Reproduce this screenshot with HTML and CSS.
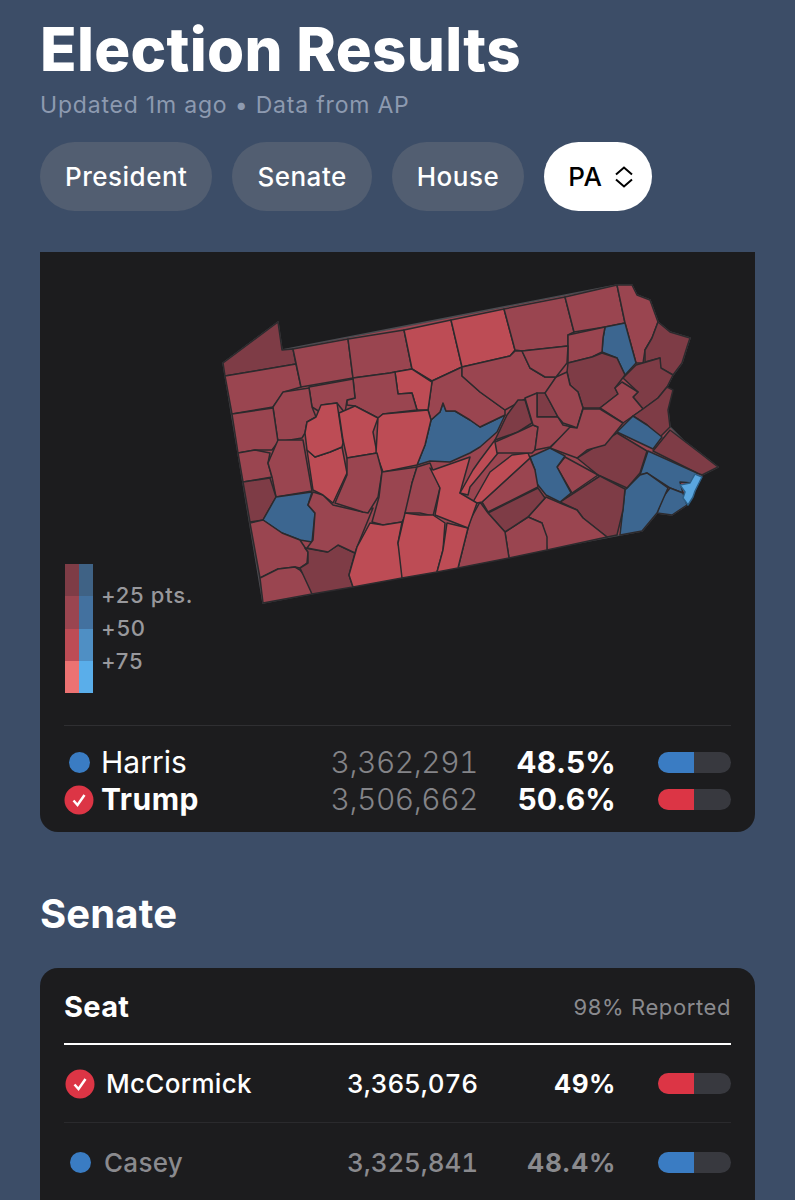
FILE: index.html
```html
<!DOCTYPE html>
<html lang="en">
<head>
<meta charset="utf-8">
<title>Election Results</title>
<link rel="stylesheet" href="styles.css">
</head>
<body>
<header class="head">
  <h1 class="title">Election Results</h1>
  <p class="sub">Updated 1m ago • Data from AP</p>
  <nav class="pills">
    <span class="pill">President</span>
    <span class="pill">Senate</span>
    <span class="pill">House</span>
    <span class="pill pill-on">PA
      <svg class="updown" viewBox="0 0 20 24" width="20" height="24"><path d="M2 9.500 10 2.500l8 7M2 14.500 10 21.500l8-7"/></svg>
    </span>
  </nav>
</header>

<section class="card card-map">
  <div class="map">
    <svg class="map-svg" viewBox="40 252 715 465" width="715" height="465">
      <polygon class="state" points="223,363 278,322 282,350 617,285 632,285 637,295 650,300 658,322 670,332 690,338 687,347 682,363 673,375 667,387 670,393 668,410 670,427 683,440 700,453 718,467 702,475 693,495 687,505 672,515 657,513 647,525 642,531 620,535 263,603"/>
      <polygon class="c d" points="223,363 278,322 282,350 293,349 296,364 225,376"/>
      <polygon class="c m" points="225,376 296,364 301,387 284,392 273,407 232,414"/>
      <polygon class="c m" points="293,349 348,339 353,378 301,387"/>
      <polygon class="c m" points="348,339 404,330 412,369 395,372 390,373 353,378"/>
      <polygon class="c b" points="404,330 451,320 462,367 432,381 412,369"/>
      <polygon class="c b" points="451,320 504,309 515,350 510,356 462,367"/>
      <polygon class="c m" points="504,309 565,297 574,332 568,335 568,346 522,351 515,350"/>
      <polygon class="c m" points="565,297 617,285 625,323 605,327 574,332"/>
      <polygon class="c m" points="617,285 632,285 637,295 650,300 658,322 652,338 645,350 643,363 636,363 625,323"/>
      <polygon class="c u" points="605,327 625,323 636,363 625,375 617,358 602,352 603,338"/>
      <polygon class="c m" points="568,335 605,327 603,338 602,352 592,357 568,363"/>
      <polygon class="c d" points="658,322 670,332 690,338 687,347 682,363 673,375 660,368 660,358 645,362 645,350 652,338"/>
      <polygon class="c d" points="636,365 660,358 661,368 673,375 667,387 658,398 643,409 633,397 638,392 623,378"/>
      <polygon class="c d" points="567,372 568,363 592,357 602,353 617,358 625,375 615,388 618,394 600,408 583,408 578,392 570,385"/>
      <polygon class="c m" points="615,388 622,382 638,392 633,397 643,409 623,423 600,408 618,394"/>
      <polygon class="c d" points="643,409 658,398 667,387 673,390 668,410 670,427 660,437 647,425 633,416"/>
      <polygon class="c u" points="633,416 647,425 662,437 653,449 617,432"/>
      <polygon class="c d" points="653,451 670,430 683,440 700,453 718,467 702,475 697,473"/>
      <polygon class="c u" points="648,451 697,473 692,483 680,482 683,493 670,488 647,473 640,475"/>
      <polygon class="c u" points="670,488 683,493 687,505 672,515 657,513 663,497"/>
      <polygon class="c u" points="640,475 647,473 668,488 657,513 647,525 642,531 620,535 625,490"/>
      <polygon class="c l" points="695,474 702,477 695,491 693,497 688,505 683,498 685,492 680,485 690,483"/>
      <polygon class="c d" points="577,458 617,433 647,451 640,473 627,488 598,475"/>
      <polygon class="c d" points="560,502 600,476 625,489 623,510 617,535 607,537 583,518 577,510"/>
      <polygon class="c m" points="565,457 598,475 572,493 557,467"/>
      <polygon class="c u" points="550,448 565,456 557,467 571,493 560,502 546,495 538,485 530,480 535,470 530,457"/>
      <polygon class="c m" points="546,497 560,503 577,510 583,518 607,537 547,550 545,535 542,523 528,517"/>
      <polygon class="c m" points="528,517 542,523 547,537 547,550 509,558 505,532"/>
      <polygon class="c d" points="488,513 538,488 545,498 528,517 505,532"/>
      <polygon class="c m" points="470,520 480,502 488,513 505,532 509,558 458,568 468,528"/>
      <polygon class="c m" points="482,502 530,458 535,470 538,487 488,512"/>
      <polygon class="c b" points="473,502 490,472 512,455 528,453 530,458 482,502 477,503"/>
      <polygon class="c u" points="417,465 425,445 431,420 440,412 443,403 446,411 455,411 470,420 480,427 505,415 497,432 480,447 470,453 450,462 430,461"/>
      <polygon class="c m" points="432,381 462,367 462,376 480,392 505,410 505,415 480,427 470,420 455,411 446,411 443,403 440,412 431,420 428,410"/>
      <polygon class="c m" points="462,367 510,356 515,351 522,351 530,368 545,377 556,377 547,393 527,398 505,410 480,392 462,376"/>
      <polygon class="c b" points="395,372 412,369 432,382 428,410 417,410 412,393 398,394"/>
      <polygon class="c m" points="353,378 390,373 395,372 398,394 412,393 417,410 383,414 378,418 355,406 347,405 347,400 355,398"/>
      <polygon class="c m" points="309,387 353,379 355,398 347,400 345,413 337,403 322,405 320,412 312,407"/>
      <polygon class="c m" points="273,407 283,392 309,388 312,407 316,417 307,422 305,433 302,438 278,442"/>
      <polygon class="c m" points="232,414 273,408 278,442 272,450 255,450 238,453"/>
      <polygon class="c m" points="238,453 255,450 270,453 268,463 272,477 243,482"/>
      <polygon class="c m" points="268,463 278,440 303,440 312,491 276,497 272,477"/>
      <polygon class="c d" points="243,482 270,478 276,497 263,520 250,522"/>
      <polygon class="c u" points="276,497 312,492 308,505 315,513 312,542 300,540 282,533 263,520"/>
      <polygon class="c m" points="250,523 263,520 282,533 300,540 308,552 307,563 300,568 295,567 278,569 260,578"/>
      <polygon class="c m" points="260,578 278,569 295,567 300,570 308,580 312,594 263,603"/>
      <polygon class="c d" points="300,568 308,563 308,552 305,548 327,552 338,545 355,553 349,575 353,587 312,594"/>
      <polygon class="c m" points="313,492 323,495 333,505 363,512 373,508 357,547 355,553 338,545 328,552 307,548 313,540 315,513 308,505"/>
      <polygon class="c b" points="307,450 315,457 330,452 342,447 347,473 333,503 323,495 313,490"/>
      <polygon class="c b" points="305,433 307,422 316,417 321,405 337,403 343,443 342,447 330,452 315,457 307,450"/>
      <polygon class="c b" points="339,413 355,406 378,418 373,432 377,453 347,458 343,440"/>
      <polygon class="c b" points="378,418 383,414 428,410 431,420 425,445 417,465 383,472 376,453"/>
      <polygon class="c m" points="347,458 377,453 382,472 378,497 368,513 363,512 335,503 347,475"/>
      <polygon class="c m" points="382,472 417,467 412,483 407,512 402,522 383,525 372,522 379,497"/>
      <polygon class="c m" points="417,467 430,463 440,488 433,516 420,513 405,513 412,483"/>
      <polygon class="c b" points="370,523 383,525 402,522 398,543 403,565 402,578 353,587 349,575 357,547"/>
      <polygon class="c b" points="405,513 420,515 433,515 445,523 443,550 437,572 402,578 398,543"/>
      <polygon class="c b" points="447,523 468,528 458,568 437,572 443,550"/>
      <polygon class="c b" points="430,468 433,470 470,457 460,493 477,503 468,528 435,515 440,488"/>
      <polygon class="c b" points="460,493 473,470 480,460 495,440 498,453 480,475 470,487 468,495"/>
      <polygon class="c d" points="507,415 518,400 525,400 532,423 518,432 495,440"/>
      <polygon class="c m" points="495,442 518,432 533,425 538,427 535,450 532,453 497,453"/>
      <polygon class="c d" points="537,393 545,393 550,402 558,417 537,417"/>
      <polygon class="c m" points="525,398 537,393 537,417 558,417 563,425 572,427 550,447 535,450 538,427 533,425"/>
      <polygon class="c m" points="545,393 556,377 567,372 570,385 578,392 583,408 577,428 572,426 563,423 558,417 550,402"/>
      <polygon class="c m" points="583,409 600,409 623,423 615,433 605,445 587,450 577,458 550,448 570,427 577,428"/>
      <polygon class="c m" points="522,351 568,346 567,363 556,377 545,377 530,368"/>
    </svg>
    <div class="legend">
      <div class="scale">
        <span class="sw r1"></span><span class="sw u1"></span>
        <span class="sw r2"></span><span class="sw u2"></span>
        <span class="sw r3"></span><span class="sw u3"></span>
        <span class="sw r4"></span><span class="sw u4"></span>
      </div>
      <div class="scale-labels">
        <span>+25 pts.</span>
        <span>+50</span>
        <span>+75</span>
      </div>
    </div>
  </div>
  <div class="pres">
    <div class="pres-row">
      <span class="who"><span class="mark"><span class="dot"></span></span><span class="name">Harris</span></span>
      <span class="votes">3,362,291</span>
      <span class="pct">48.5%</span>
      <span class="bar"><span class="fill fill-blue"></span></span>
    </div>
    <div class="pres-row">
      <span class="who"><span class="mark"><svg class="tick" viewBox="0 0 30 30" width="30" height="30"><circle cx="15" cy="15" r="14.500"/><path d="M9.500 15.500 13.500 20 20.500 10"/></svg></span><span class="name name-win">Trump</span></span>
      <span class="votes">3,506,662</span>
      <span class="pct">50.6%</span>
      <span class="bar"><span class="fill fill-red"></span></span>
    </div>
  </div>
</section>

<h2 class="section">Senate</h2>

<section class="card card-seat">
  <div class="seat-head">
    <span class="seat-title">Seat</span>
    <span class="seat-rep">98% Reported</span>
  </div>
  <div class="seat-row">
    <span class="who who-seat"><span class="mark"><svg class="tick" viewBox="0 0 30 30" width="30" height="30"><circle cx="15" cy="15" r="14.500"/><path d="M9.500 15.500 13.500 20 20.500 10"/></svg></span><span class="seat-name">McCormick</span></span>
    <span class="seat-votes">3,365,076</span>
    <span class="seat-pct">49%</span>
    <span class="bar"><span class="fill fill-red"></span></span>
  </div>
  <div class="seat-row seat-lose">
    <span class="who who-seat who-lose"><span class="mark"><span class="dot"></span></span><span class="seat-name">Casey</span></span>
    <span class="seat-votes">3,325,841</span>
    <span class="seat-pct">48.4%</span>
    <span class="bar"><span class="fill fill-blue"></span></span>
  </div>
</section>
</body>
</html>
```

FILE: styles.css
```css
* { box-sizing: border-box; }
html, body { margin: 0; height: 1200px; overflow: hidden; }
body {
  background: #3c4d67;
  color: #fff;
  font-family: Inter, "Liberation Sans", sans-serif;
  padding: 0 40px;
}
.head { height: 252px; }
.title {
  margin: 0;
  padding-top: 15px;
  font-size: 60px;
  line-height: 68px;
  font-weight: 800;
  letter-spacing: 0.3px;
}
.sub {
  margin: 7px 0 0;
  font-size: 23px;
  line-height: 30px;
  letter-spacing: 0.8px;
  color: #8d9ab0;
}
.pills { display: flex; gap: 20px; margin-top: 22px; }
.pill {
  display: inline-flex;
  align-items: center;
  height: 69px;
  padding: 0 25px;
  border-radius: 34.5px;
  background: #525e71;
  font-size: 26px;
  font-weight: 500;
  letter-spacing: 0.5px;
}
.pill-on { background: #fff; color: #000; gap: 12px; padding: 0 18px 0 24px; }
.updown { fill: none; stroke: #000; stroke-width: 2; }

.card { background: #1c1c1e; width: 715px; }
.card-map { height: 580px; border-radius: 0 0 18px 18px; }
.map { position: relative; height: 473px; }
.map-svg { display: block; filter: blur(0.35px); }
.state { fill: #9a4550; stroke: #4a4b50; stroke-width: 1.5; stroke-linejoin: round; }
.c { stroke: #2c2a2d; stroke-width: 1.5; stroke-linejoin: round; }
.b { fill: #bd4c55; }
.m { fill: #9a4550; }
.d { fill: #7e3c46; }
.u { fill: #3c6690; }
.l { fill: #5aa6df; stroke: #2d5f86; }

.legend { position: absolute; left: 25px; top: 312px; display: flex; gap: 8px; }
.scale { display: grid; grid-template-columns: 14px 14px; grid-auto-rows: 32.25px; }
.r1 { background: #7e3c46; } .u1 { background: #3f6285; }
.r2 { background: #9a4550; } .u2 { background: #43719f; }
.r3 { background: #bd4c55; } .u3 { background: #4f8fc4; }
.r4 { background: #ec7272; } .u4 { background: #5aaeea; }
.scale-labels {
  display: flex;
  flex-direction: column;
  gap: 3px;
  padding-top: 16px;
  font-size: 22px;
  line-height: 30px;
  letter-spacing: 0.7px;
  color: #98989c;
  font-weight: 500;
}

.pres {
  margin: 0 24px;
  padding-top: 18px;
  border-top: 1px solid #2f2f32;
}
.pres-row {
  display: grid;
  grid-template-columns: 1fr 161px 138px 115px;
  align-items: center;
  height: 37px;
}
.who { display: flex; align-items: center; gap: 7px; }
.mark { width: 30px; display: flex; align-items: center; justify-content: center; }
.dot { width: 21px; height: 21px; border-radius: 50%; background: #3a7cc3; }
.tick { display: block; }
.tick circle { fill: #dc3545; }
.tick path { fill: none; stroke: #fff; stroke-width: 2.5; }
.name { font-size: 30px; line-height: 35px; }
.name-win { font-weight: 700; letter-spacing: 0.5px; }
.votes { text-align: right; font-size: 30px; line-height: 35px; color: #848488; font-weight: 300; letter-spacing: -0.5px; font-variant-numeric: tabular-nums; }
.pct { text-align: right; font-size: 30px; line-height: 35px; font-weight: 700; letter-spacing: 0.2px; }
.bar {
  justify-self: end;
  width: 73px;
  height: 21px;
  border-radius: 10.5px;
  background: #38393f;
  overflow: hidden;
  display: block;
}
.fill { display: block; height: 100%; width: 36px; }
.fill-blue { background: #3a7cc3; }
.fill-red { background: #dc3545; }

.section {
  margin: 59px 0 0;
  font-size: 40px;
  line-height: 46px;
  font-weight: 700;
  letter-spacing: 0.15px;
}
.card-seat { margin-top: 31px; border-radius: 18px 18px 0 0; padding: 0 24px; height: 240px; }
.seat-head {
  display: flex;
  justify-content: space-between;
  align-items: center;
  height: 77px;
  border-bottom: 2px solid #fff;
}
.seat-title { font-size: 29px; font-weight: 700; padding-top: 1px; letter-spacing: 0.3px; }
.seat-rep { font-size: 22px; letter-spacing: 0.6px; color: #8a8a8e; padding-top: 2px; }
.seat-row {
  display: grid;
  grid-template-columns: 1fr 161px 138px 115px;
  align-items: center;
  height: 78px;
  border-bottom: 1px solid #2a2a2d;
}
.who-seat { gap: 11px; padding-left: 1px; }
.who-lose { gap: 9px; }
.seat-name { font-size: 26px; font-weight: 500; letter-spacing: 0.3px; }
.seat-votes { text-align: right; font-size: 26px; font-weight: 500; letter-spacing: -0.1px; font-variant-numeric: tabular-nums; }
.seat-pct { text-align: right; font-size: 26px; font-weight: 700; letter-spacing: 0.5px; }
.seat-lose { color: #8a8a8e; border-bottom: 0; }
```
